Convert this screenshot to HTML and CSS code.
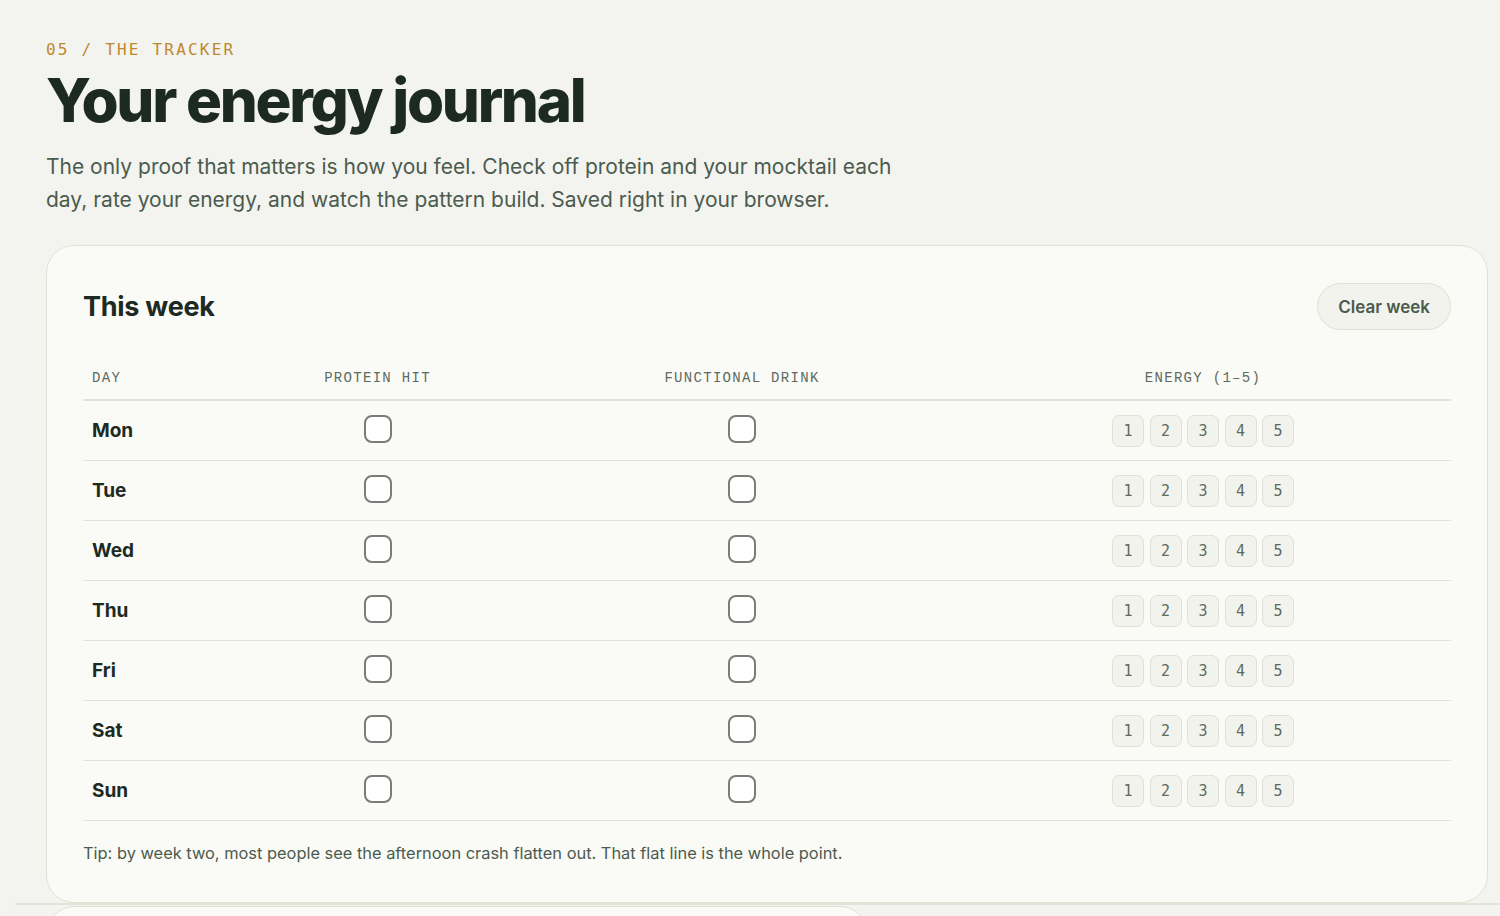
FILE: index.html
```html
<!DOCTYPE html>
<html lang="en">
<head>
    <meta charset="UTF-8">
    <meta name="viewport" content="width=device-width, initial-scale=1.0">
    <title>Your energy journal</title>
    <link rel="stylesheet" href="styles.css">
</head>
<body>
    <main class="page">
        <section class="tracker">
            <p class="eyebrow">05 / The tracker</p>
            <h1 class="title">Your energy journal</h1>
            <p class="lede">The only proof that matters is how you feel. Check off protein and your mocktail each day, rate your energy, and watch the pattern build. Saved right in your browser.</p>

            <div class="card">
                <div class="card-head">
                    <h2>This week</h2>
                    <button id="clear-button" class="pill-button">Clear week</button>
                </div>

                <div class="journal">
                    <div class="journal-row journal-head">
                        <div class="cell day-cell">Day</div>
                        <div class="cell center">Protein hit</div>
                        <div class="cell center">Functional drink</div>
                        <div class="cell center">Energy (1–5)</div>
                    </div>
                    <div id="journal-body"></div>
                </div>

                <p class="tip">Tip: by week two, most people see the afternoon crash flatten out. That flat line is the whole point.</p>
            </div>
        </section>

        <section class="next">
            <div class="next-card"></div>
        </section>
    </main>

    <script>
        // 曜日
        const DAYS = ['Mon', 'Tue', 'Wed', 'Thu', 'Fri', 'Sat', 'Sun'];
        const STORE_KEY = 'energy-journal';

        const body = document.getElementById('journal-body');
        const clearButton = document.getElementById('clear-button');

        let week = load();

        function load() {
            try {
                const saved = JSON.parse(localStorage.getItem(STORE_KEY));
                if (saved && saved.length === DAYS.length) return saved;
            } catch (e) {}
            return DAYS.map(() => ({ protein: false, drink: false, energy: 0 }));
        }

        function save() {
            try { localStorage.setItem(STORE_KEY, JSON.stringify(week)); } catch (e) {}
        }

        // --- rows ---
        function render() {
            body.innerHTML = '';
            DAYS.forEach((day, i) => {
                const row = document.createElement('div');
                row.className = 'journal-row';

                const name = document.createElement('div');
                name.className = 'cell day-cell day-name';
                name.textContent = day;
                row.appendChild(name);

                ['protein', 'drink'].forEach(key => {
                    const cell = document.createElement('div');
                    cell.className = 'cell center';
                    const box = document.createElement('input');
                    box.type = 'checkbox';
                    box.className = 'check';
                    box.checked = week[i][key];
                    box.addEventListener('change', () => {
                        week[i][key] = box.checked;
                        save();
                    });
                    cell.appendChild(box);
                    row.appendChild(cell);
                });

                const energy = document.createElement('div');
                energy.className = 'cell center';
                const scale = document.createElement('div');
                scale.className = 'scale';
                for (let n = 1; n <= 5; n++) {
                    const b = document.createElement('button');
                    b.className = 'score' + (week[i].energy === n ? ' active' : '');
                    b.textContent = n;
                    b.addEventListener('click', () => {
                        week[i].energy = week[i].energy === n ? 0 : n;
                        save();
                        render();
                    });
                    scale.appendChild(b);
                }
                energy.appendChild(scale);
                row.appendChild(energy);

                body.appendChild(row);
            });
        }

        clearButton.addEventListener('click', () => {
            week = DAYS.map(() => ({ protein: false, drink: false, energy: 0 }));
            save();
            render();
        });

        render();
    </script>
</body>
</html>
```

FILE: styles.css
```css
body {
    margin: 0;
    background-color: #f3f4ef;
    color: #1c2a21;
    font-family: 'Inter', 'Noto Sans', sans-serif;
}

.page {
    padding: 40px 0 0 46px;
}

.tracker {
    width: 1442px;
}

.eyebrow {
    margin: 0;
    font-family: 'DejaVu Sans Mono', monospace;
    font-size: 16px;
    letter-spacing: 2.2px;
    text-transform: uppercase;
    color: #c0882c;
}

.title {
    margin: 8px 0 0;
    font-size: 60px;
    font-weight: 800;
    letter-spacing: -0.038em;
    line-height: 1.1;
    color: #1c2a21;
}

.lede {
    margin: 17px 0 0;
    max-width: 870px;
    font-size: 21px;
    line-height: 33px;
    color: #4b5b4e;
}

/* カード */
.card {
    margin-top: 29px;
    background-color: #fafaf6;
    border: 1px solid #e0e1d5;
    border-radius: 28px;
    padding: 37px 36px 39px 36px;
}

.card-head {
    display: flex;
    justify-content: space-between;
    align-items: center;
}

.card-head h2 {
    margin: 0;
    font-size: 27px;
    font-weight: 700;
    letter-spacing: -0.01em;
    color: #1c2a21;
}

.pill-button {
    height: 47px;
    padding: 0 20px;
    border: 1px solid #dfe0d4;
    border-radius: 24px;
    background-color: #f2f3ed;
    font-family: 'Inter', 'Noto Sans', sans-serif;
    font-size: 17px;
    font-weight: 600;
    color: #4b5b4e;
    cursor: pointer;
}

.pill-button:hover {
    background-color: #e9eae2;
}

/* 表 */
.journal {
    margin-top: 26px;
}

.journal-row {
    display: grid;
    grid-template-columns: 143px 303px 426px 1fr;
    height: 59px;
    border-bottom: 1px solid #e3e4d9;
}

.journal-head {
    height: 43px;
    border-bottom-width: 2px;
}

.journal-head .cell {
    font-family: 'Liberation Mono', monospace;
    font-size: 14px;
    letter-spacing: 1.3px;
    text-transform: uppercase;
    color: #5d6b60;
}

.cell {
    display: flex;
    align-items: center;
}

.center {
    justify-content: center;
}

.day-cell {
    padding-left: 9px;
}

.day-name {
    font-size: 19px;
    font-weight: 700;
    color: #1c2a21;
}

.check {
    appearance: none;
    -webkit-appearance: none;
    margin: -4px 0 0;
    width: 28px;
    height: 28px;
    border: 2px solid #7a7c78;
    border-radius: 8px;
    background-color: #fff;
    cursor: pointer;
}

.check:checked {
    background-color: #2f5a3e;
    border-color: #2f5a3e;
}

.scale {
    display: flex;
    gap: 5.5px;
}

.score {
    width: 32px;
    height: 32px;
    padding: 0;
    border: 1px solid #e0e1d5;
    border-radius: 7px;
    background-color: #f3f3ee;
    font-family: 'DejaVu Sans Mono', monospace;
    font-size: 15px;
    color: #5d6b60;
    cursor: pointer;
}

.score.active {
    background-color: #2f5a3e;
    border-color: #2f5a3e;
    color: #fff;
}

.tip {
    margin: 22px 0 0;
    font-size: 16.4px;
    color: #4b5b4e;
}

/* 次のセクション */
.next {
    margin-left: -31px;
    border-top: 2px solid #e1e4d8;
    padding: 1px 0 0 31px;
}

.next-card {
    width: 820px;
    height: 40px;
    background-color: #fafaf6;
    border: 1px solid #e0e1d5;
    border-radius: 28px 28px 0 0;
}
```
